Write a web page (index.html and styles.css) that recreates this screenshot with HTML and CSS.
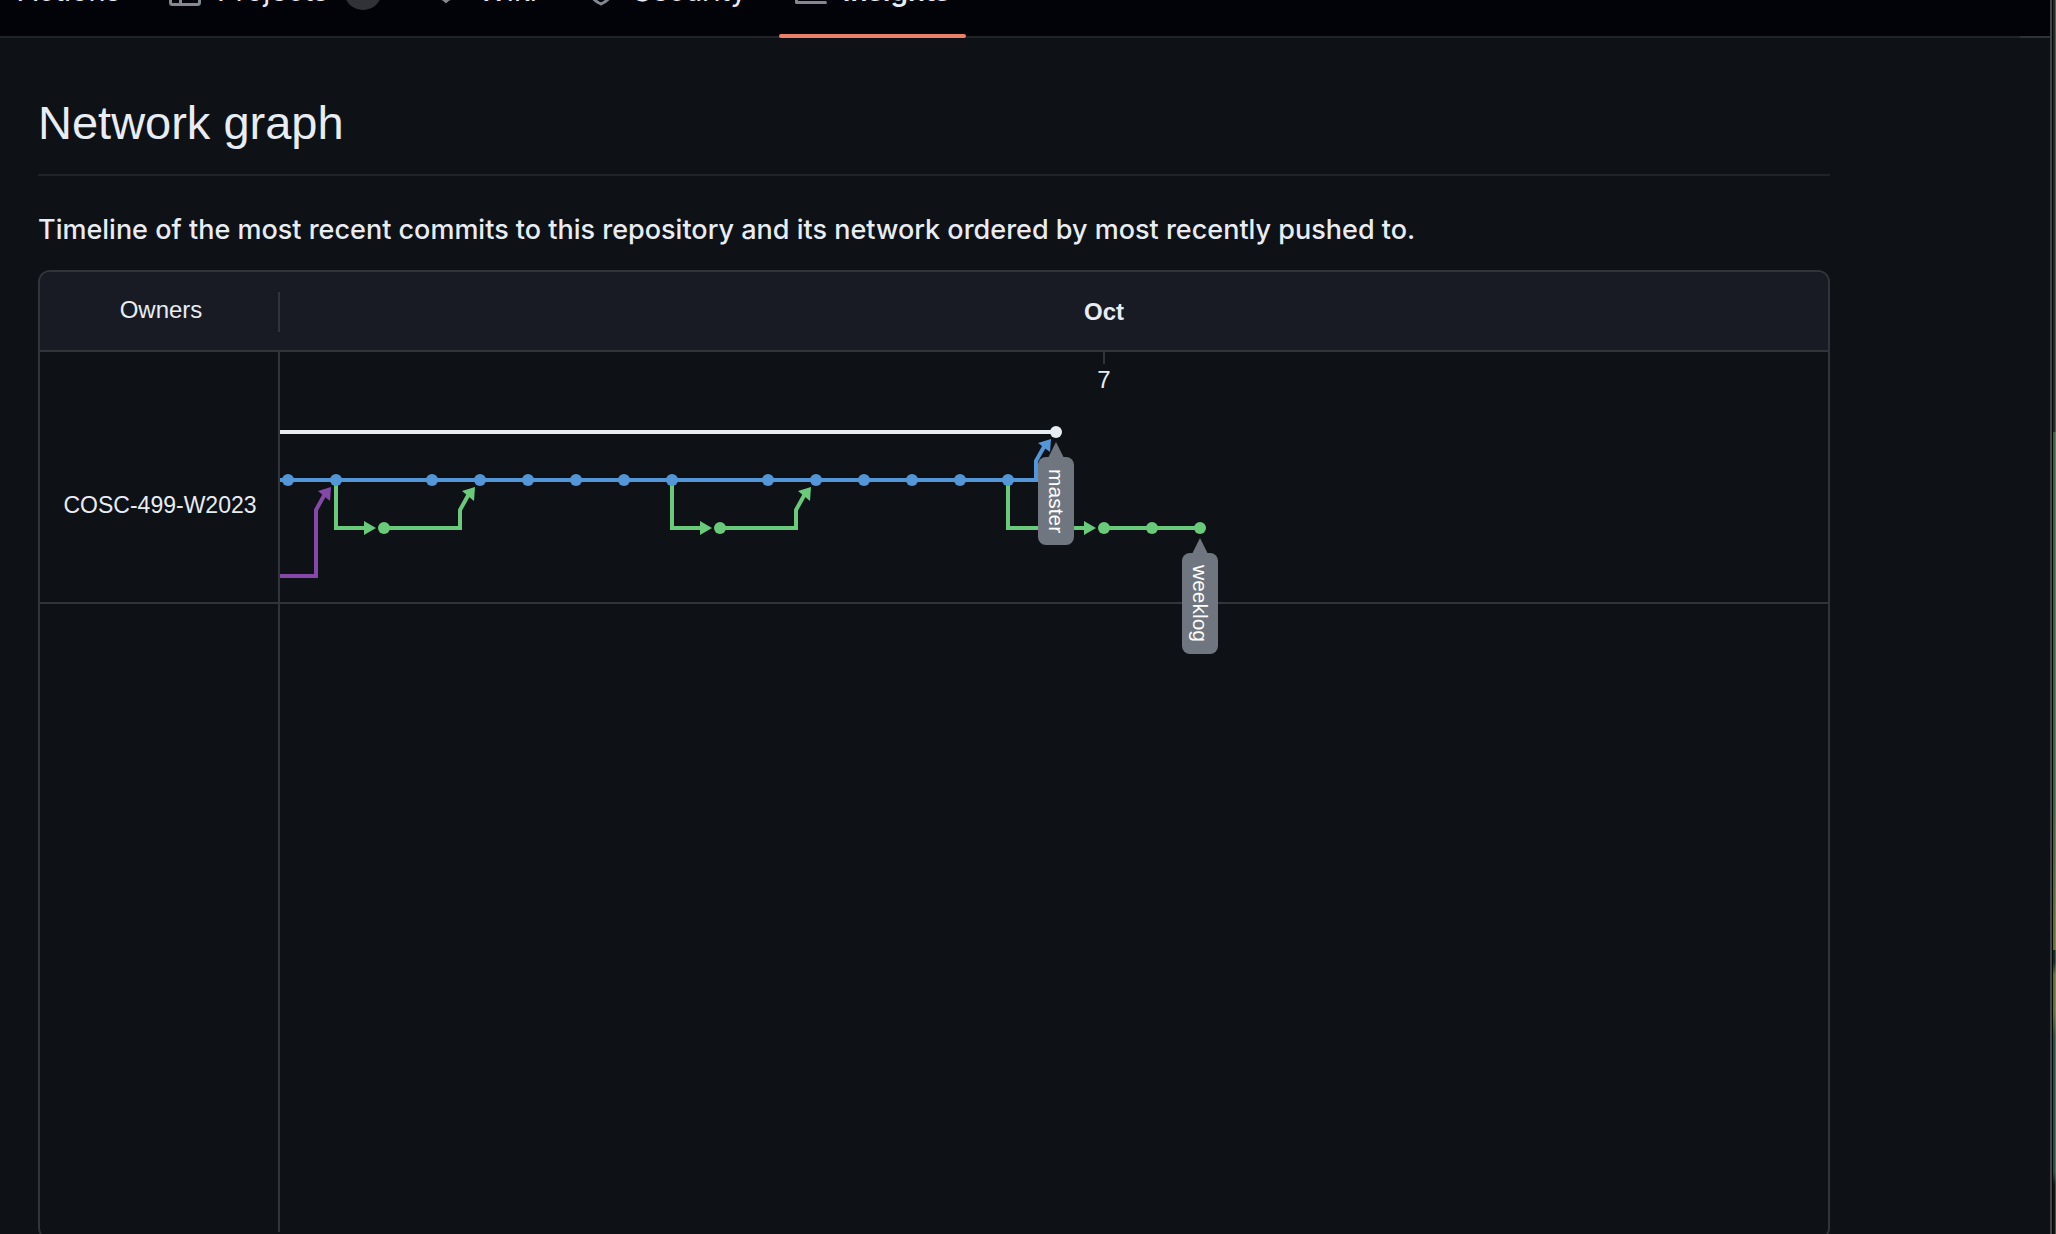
FILE: index.html
```html
<!DOCTYPE html>
<html lang="en">
<head>
<meta charset="utf-8">
<title>Network graph</title>
<link rel="stylesheet" href="styles.css">
</head>
<body>
<div class="window">
  <div class="page">
    <nav class="tabs" aria-label="Repository">
      <a class="tab" href="#actions">Actions</a>
      <a class="tab" href="#projects"><svg class="icon" viewBox="0 0 16 16"><path d="M0 1.75C0 .784.784 0 1.750 0h12.500C15.216 0 16 .784 16 1.750v12.500A1.750 1.750 0 0 1 14.250 16H1.750A1.750 1.750 0 0 1 0 14.250ZM6.500 6.500v8h7.750a.25.25 0 0 0 .25-.25V6.500Zm8-1.500V1.750a.25.25 0 0 0-.25-.25H6.500V5Zm-13 1.500v7.750c0 .138.112.25.25.25H5v-8ZM5 5V1.500H1.750a.25.25 0 0 0-.25.25V5Z"/></svg>Projects<span class="counter">1</span></a>
      <a class="tab" href="#wiki"><svg class="icon" viewBox="0 0 16 16"><path d="M0 1.750A.75.75 0 0 1 .75 1h4.253c1.227 0 2.317.59 3 1.501A3.743 3.743 0 0 1 11.006 1h4.245a.75.75 0 0 1 .75.75v10.500a.75.75 0 0 1-.75.75h-4.507a2.250 2.250 0 0 0-1.591.659l-.622.621a.75.75 0 0 1-1.060 0l-.622-.621A2.250 2.250 0 0 0 5.258 13H.75a.75.75 0 0 1-.75-.75Zm7.251 10.324.004-5.073-.002-2.253A2.250 2.250 0 0 0 5.003 2.500H1.500v9h3.757a3.750 3.750 0 0 1 1.994.574ZM8.755 4.750l-.004 7.322a3.752 3.752 0 0 1 1.992-.572H14.500v-9h-3.495a2.250 2.250 0 0 0-2.250 2.250Z"/></svg>Wiki</a>
      <a class="tab" href="#security"><svg class="icon" viewBox="0 0 16 16"><path fill="none" stroke="currentColor" stroke-width="1.500" d="M8 .9 2.250 2.750V7c0 3.600 2.200 6.400 5.750 8 3.550-1.600 5.750-4.400 5.750-8V2.750Z"/></svg>Security</a>
      <a class="tab selected" href="#insights" aria-current="page"><svg class="icon" viewBox="0 0 16 16"><path d="M1.500 1.750V13.500h13.750a.75.75 0 0 1 0 1.500H.75a.75.75 0 0 1-.75-.75V1.750a.75.75 0 0 1 1.500 0Zm14.280 2.530-5.250 5.250a.75.75 0 0 1-1.060 0L7 7.060 4.280 9.780a.75.75 0 0 1-1.060-1.060l3.250-3.250a.75.75 0 0 1 1.060 0L10 7.940l4.720-4.720a.75.75 0 0 1 1.060 1.060Z"/></svg>Insights</a>
    </nav>
    <main class="content">
      <h1 class="title">Network graph</h1>
      <p class="intro">Timeline of the most recent commits to this repository and its network ordered by most recently pushed to.</p>
      <section class="network" aria-label="Commit network">
        <header class="network-head">
          <div class="owners">Owners</div>
          <div class="month">Oct</div>
        </header>
        <div class="network-row">
          <div class="owner">COSC-499-W2023</div>
          <div class="timeline">
            <svg class="graph" width="960" height="330" viewBox="0 0 960 330">
              <g class="line main"><path d="M0 80H776"/></g>
              <g class="line blue"><path d="M0 128H756V109L765 93"/></g>
              <g class="line purple"><path d="M0 224H36V158L46 140"/></g>
              <g class="line green">
                <path d="M56 128V176H86M104 176H180V158L190 140"/>
                <path d="M392 128V176H422M440 176H516V158L526 140"/>
                <path d="M728 128V176H806M824 176H920"/>
              </g>
              <g class="fill-blue">
                <circle cx="8" cy="128" r="6"/><circle cx="56" cy="128" r="6"/><circle cx="152" cy="128" r="6"/><circle cx="200" cy="128" r="6"/><circle cx="248" cy="128" r="6"/><circle cx="296" cy="128" r="6"/><circle cx="344" cy="128" r="6"/><circle cx="392" cy="128" r="6"/><circle cx="488" cy="128" r="6"/><circle cx="536" cy="128" r="6"/><circle cx="584" cy="128" r="6"/><circle cx="632" cy="128" r="6"/><circle cx="680" cy="128" r="6"/><circle cx="728" cy="128" r="6"/>
                <path d="M771 87 758 91 770 100Z"/>
              </g>
              <path class="fill-purple" d="M51 135 38 139 50 149Z"/>
              <g class="fill-green">
                <circle cx="104" cy="176" r="6"/><circle cx="440" cy="176" r="6"/><circle cx="824" cy="176" r="6"/><circle cx="872" cy="176" r="6"/><circle cx="920" cy="176" r="6"/>
                <path d="M84 169v14l12-7ZM420 169v14l12-7ZM804 169v14l12-7Z"/>
                <path d="M195 135 182 139 194 149ZM531 135 518 139 530 149Z"/>
              </g>
              <circle class="fill-main" cx="776" cy="80" r="6"/>
              <g class="fill-label"><path d="M776 90 784 106H768Z"/><path d="M920 186 928 202H912Z"/></g>
            </svg>
            <div class="day">7</div>
            <span class="branch branch-master">master</span>
            <span class="branch branch-weeklog">weeklog</span>
          </div>
        </div>
        <div class="network-rest"></div>
      </section>
    </main>
  </div>
  <div class="edge"></div>
</div>
</body>
</html>
```
FILE: styles.css
```css
*, *::before, *::after { box-sizing: border-box; }
body {
  margin: 0;
  height: 100vh;
  overflow: hidden;
  background: #0e1116;
  color: #e8ecf3;
  font-family: Inter, "Liberation Sans", sans-serif;
  font-size: 27px;
}
.window { display: flex; height: 100vh; overflow: hidden; }
.page { flex: 1; min-width: 0; border-right: 2px solid #43464a; }
/* Sliver of the desktop beside the window */
.edge {
  width: 4px;
  border-left: 1px solid #050608;
  background:
    linear-gradient(90deg, transparent 2px, rgba(160, 165, 165, 0.4) 2px),
    linear-gradient(#252b1f 0 35%, #3d6239 35% 65%, #6b702c 76% 77%, #10301c 77% 78%, #687030 79% 82%, #2c5138 84% 95%, #15170f 96%);
}
/* The tab bar is scrolled most of the way out of the window */
.tabs {
  display: flex;
  align-items: flex-start;
  gap: 16px;
  height: 96px;
  margin-top: -58px;
  padding-left: 2px;
  background: #020308;
  border-bottom: 2px solid #202328;
}
.tabs::after {
  content: "";
  align-self: flex-end;
  width: 30px;
  height: 2px;
  margin: 0 0 -2px auto;
  background: #2f3338;
}
.tab {
  display: flex;
  align-items: center;
  gap: 16px;
  height: 96px;
  padding: 1px 16px 0;
  color: #e8ecf3;
  text-decoration: none;
  font-size: 29px;
  line-height: 40px;
}
.selected {
  position: relative;
  font-size: 28px;
  font-weight: 600;
}
.selected::after {
  content: "";
  position: absolute;
  left: 0;
  right: 0;
  bottom: 0;
  height: 4px;
  border-radius: 2px;
  background: #ea8069;
}
.icon { width: 32px; height: 32px; margin-bottom: 1px; fill: #838991; color: #838991; }
.counter {
  width: 38px;
  border-radius: 20px;
  background: #303238;
  font-size: 24px;
  line-height: 38px;
  text-align: center;
}
.content { width: 1792px; max-width: 90%; margin-left: 38px; padding-top: 49px; }
.title {
  margin: 0 0 33px;
  padding-bottom: 15px;
  border-bottom: 2px solid #202328;
  font-family: "Liberation Sans", Arial, sans-serif;
  font-size: 47px;
  font-weight: 400;
  line-height: 72px;
}
.intro { margin: 0 0 19px; font-weight: 500; line-height: 42px; }
.network {
  border: 2px solid #313439;
  border-radius: 12px;
  font-family: "Liberation Sans", Arial, sans-serif;
  font-size: 24px;
}
.network-head {
  display: flex;
  align-items: center;
  height: 80px;
  padding-top: 2px;
  background: #181b23;
  border-bottom: 2px solid #313439;
  border-radius: 10px 10px 0 0;
}
.owners {
  width: 240px;
  padding: 0 0 4px 4px;
  border-right: 2px solid #313439;
  line-height: 36px;
  text-align: center;
}
.month { padding-left: 804px; font-weight: 700; }
.network-row { display: flex; height: 252px; border-bottom: 2px solid #313439; }
.owner {
  width: 240px;
  padding: 56px 0 0 2px;
  border-right: 2px solid #313439;
  font-size: 23px;
  line-height: 194px;
  text-align: center;
}
.timeline { position: relative; flex: 1; }
.graph { position: absolute; left: 0; top: 0; overflow: visible; }
.line { fill: none; stroke-width: 4; }
.main { stroke: #e8ecf3; }
.blue { stroke: #5497d9; }
.purple { stroke: #8548a8; }
.green { stroke: #69ca7b; }
.fill-main { fill: #e8ecf3; }
.fill-blue { fill: #5497d9; }
.fill-purple { fill: #8548a8; }
.fill-green { fill: #69ca7b; }
.fill-label { fill: #707680; }
.day {
  position: absolute;
  left: 804px;
  top: 0;
  width: 40px;
  line-height: 32px;
  text-align: center;
}
.day::before {
  content: "";
  display: block;
  width: 2px;
  height: 12px;
  margin: 0 auto;
  background: #313439;
}
.branch {
  position: absolute;
  width: 36px;
  padding: 12px 0;
  border-radius: 8px;
  background: #707680;
  color: #fff;
  font-size: 21px;
  line-height: 36px;
  writing-mode: vertical-rl;
}
.branch-master { left: 758px; top: 105px; }
.branch-weeklog { left: 902px; top: 201px; }
.network-rest { height: 634px; }
.network-rest::before {
  content: "";
  display: block;
  width: 240px;
  height: 628px;
  border-right: 2px solid #313439;
}
```
